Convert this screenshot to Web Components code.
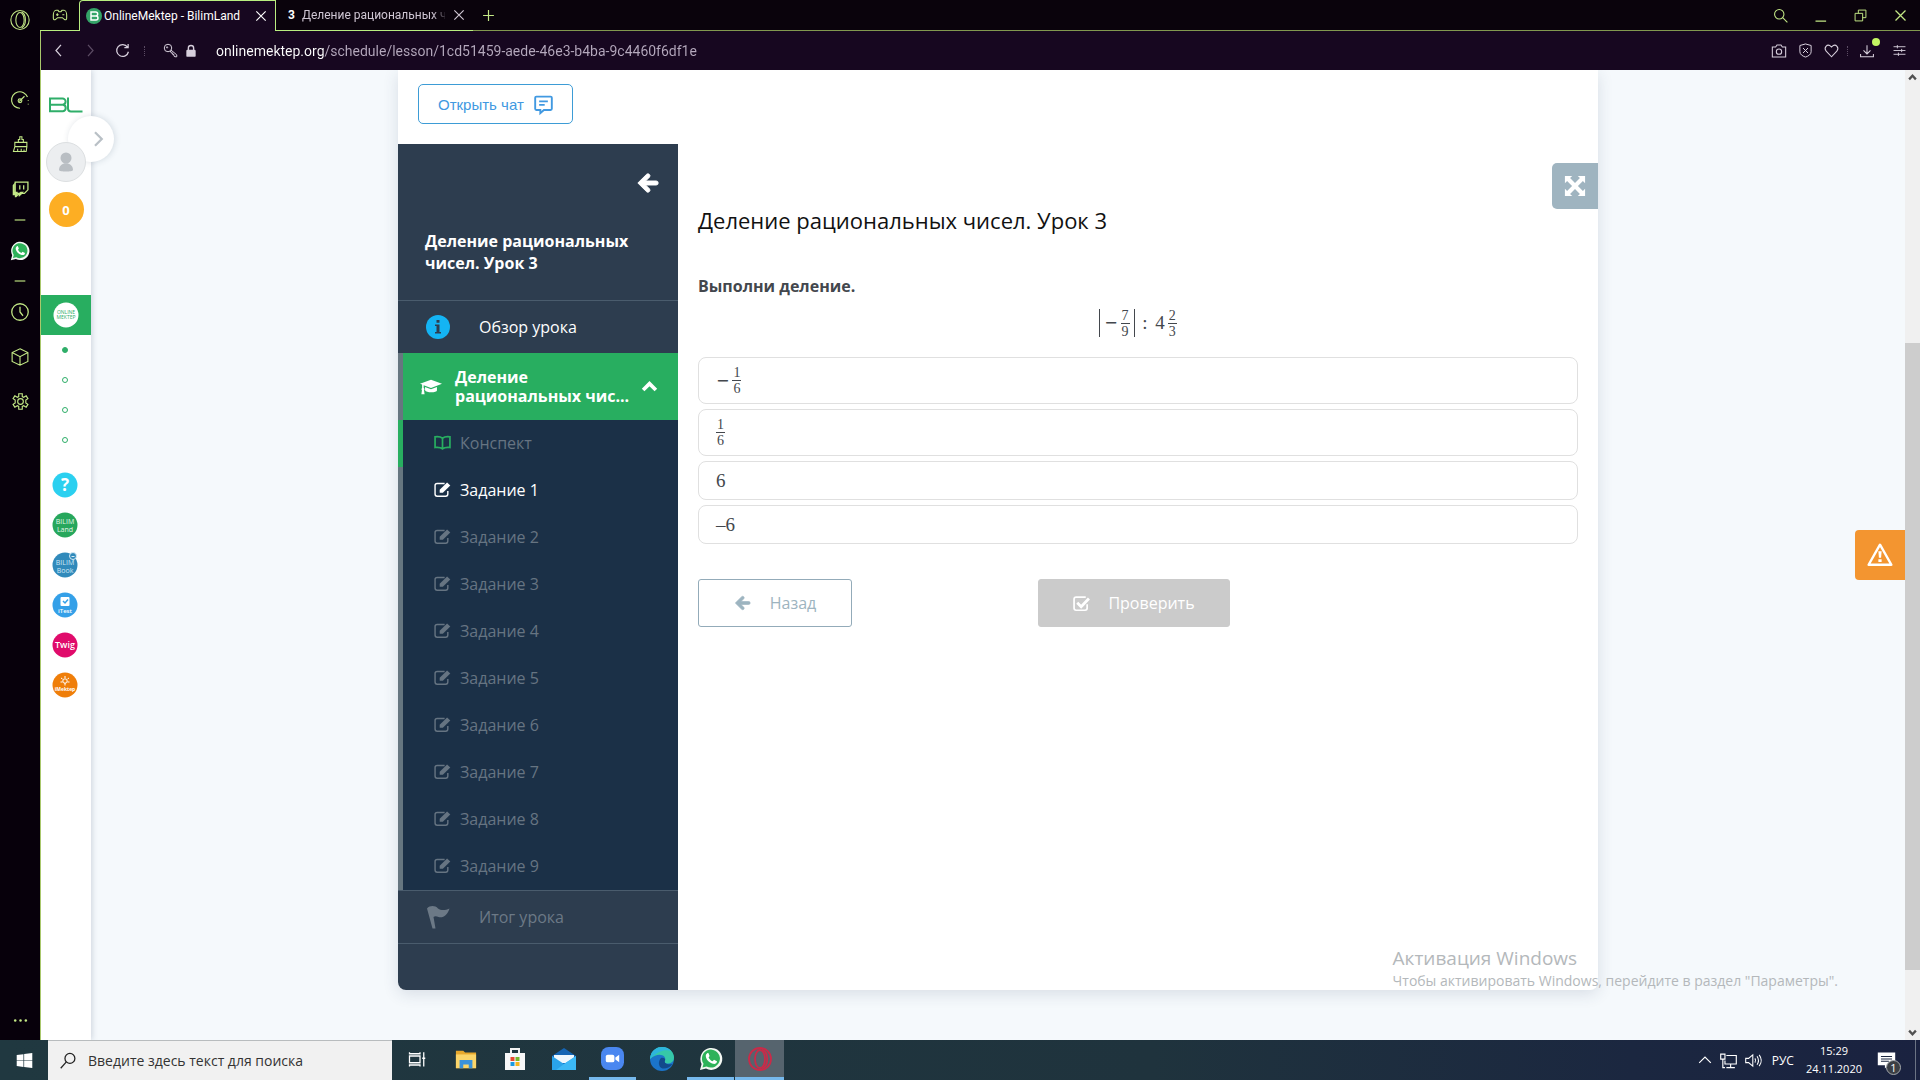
<!DOCTYPE html>
<html lang="ru">
<head>
<meta charset="utf-8">
<title>OnlineMektep - BilimLand</title>
<style>
    html, body {
        margin: 0;
        height: 100%;
    }
    body {
        font-family: "Open Sans", "Noto Sans", sans-serif;
        font-size: 16px;
        overflow: hidden;
        background: #f5f9fc;
    }
</style>
</head>
<body>
<desktop-shell>
    <browser-rail slot="rail"></browser-rail>
    <tab-strip slot="tabs">
        <browser-tab active>
            <ui-icon slot="icon" name="bilim" size="16"></ui-icon>
            OnlineMektep - BilimLand
        </browser-tab>
        <browser-tab>
            <b slot="icon">3</b>
            Деление рациональных чисел
        </browser-tab>
    </tab-strip>
    <address-bar slot="address" value="onlinemektep.org/schedule/lesson/1cd51459-aede-46e3-b4ba-9c4460f6df1e"></address-bar>
    <site-page slot="page">
        <site-rail slot="rail"></site-rail>
        <lesson-nav slot="nav" heading="Деление рациональных чисел. Урок 3">
            <nav-item icon="info">Обзор урока</nav-item>
            <nav-group heading="Деление рациональных чис...">
                <task-item icon="book" done>Конспект</task-item>
                <task-item icon="edit" current>Задание 1</task-item>
                <task-item icon="edit">Задание 2</task-item>
                <task-item icon="edit">Задание 3</task-item>
                <task-item icon="edit">Задание 4</task-item>
                <task-item icon="edit">Задание 5</task-item>
                <task-item icon="edit">Задание 6</task-item>
                <task-item icon="edit">Задание 7</task-item>
                <task-item icon="edit">Задание 8</task-item>
                <task-item icon="edit">Задание 9</task-item>
            </nav-group>
            <nav-item icon="flag" muted>Итог урока</nav-item>
        </lesson-nav>
        <lesson-task heading="Деление рациональных чисел. Урок 3">
            <span slot="question">Выполни деление.</span>
            <math-row slot="formula">
                <math-abs><math-sign>−</math-sign><math-frac top="7" bottom="9"></math-frac></math-abs>
                <span>&nbsp;:&nbsp;</span><span>4</span><math-frac top="2" bottom="3"></math-frac>
            </math-row>
            <answer-option><math-row><math-sign>−</math-sign><math-frac top="1" bottom="6"></math-frac></math-row></answer-option>
            <answer-option><math-row><math-frac top="1" bottom="6"></math-frac></math-row></answer-option>
            <answer-option><math-row>6</math-row></answer-option>
            <answer-option><math-row>–6</math-row></answer-option>
        </lesson-task>
    </site-page>
    <win-taskbar slot="taskbar"></win-taskbar>
    <win-watermark slot="watermark"></win-watermark>
</desktop-shell>

<script>
    // name: [viewBox size, markup]
    const line = (body, width = 1.3) => `<g fill="none" stroke="currentColor" stroke-width="${width}">${body}</g>`;

    const icons = {
        opera: [24, line('<ellipse cx="12" cy="12" rx="11" ry="11.3"/><ellipse cx="12" cy="12" rx="5" ry="9"/><path d="M14 2.500c6 3 6 16 0 19"/>')],
        gx: [24, line('<path d="M6 5h3l1.500 2h3L15 5h3c2 0 4 3 4 7v5c0 2-2 3-3.500 1.500L15.500 16h-7l-3 2.500C4 20 2 19 2 17v-5c0-4 2-7 4-7zM8 9.500v4M6 11.500h4M15.500 11.500h3"/>', 1.6)],
        bilim: [24, '<circle cx="12" cy="12" r="12" fill="#35a468"/><path d="M7.500 6h7a3 3 0 0 1 0 6h-7zM7.500 12h7.500a3 3 0 0 1 0 6H7.500z" fill="none" stroke="#fff" stroke-width="2.200"/>'],
        close: [24, line('<path d="M4 4l16 16M20 4L4 20"/>', 2)],
        plus: [24, line('<path d="M12 2v20M2 12h20"/>', 2.2)],
        search: [24, line('<circle cx="10" cy="10" r="7.500"/><path d="M15.500 15.500L23 23"/>', 1.7)],
        minimize: [24, line('<path d="M4 21h17"/>', 2)],
        restore: [24, line('<path d="M2 8h14v14H2zM8 8V2h14v14h-6"/>', 1.8)],
        back: [24, line('<path d="M16 3L8 12l8 9"/>', 2)],
        forward: [24, line('<path d="M8 3l8 9-8 9"/>', 2)],
        reload: [24, line('<path d="M20 6.500A9.500 9.500 0 1 0 21.500 14M21 1.500v6h-6"/>', 2)],
        key: [24, line('<circle cx="8" cy="8" r="6"/><circle cx="6.500" cy="7" r="1"/><path d="M11 13l2 1v2h2.500v2.500h2V21l1.500 1h3v-3L12.500 11"/>', 1.6)],
        lock: [24, '<rect x="4" y="10" width="16" height="12" rx="2" fill="currentColor"/><path d="M7.500 11V7a4.500 4.500 0 0 1 9 0v4" fill="none" stroke="currentColor" stroke-width="2.400"/>'],
        camera: [24, line('<path d="M2 6h5l2-3h6l2 3h5v15H2z"/><circle cx="12" cy="13" r="4"/>', 1.6)],
        shield: [24, line('<path d="M12 1.500L21 4v10c0 4-4 7-9 8.500C7 21 3 18 3 14V4zM8 8l8 8M16 8l-8 8"/>', 1.6)],
        heart: [24, line('<path d="M12 22L3.500 13C-1 7.500 5 1 10 4.500L12 6.500l2-2C19 1 25 7.500 20.500 13z"/>', 1.7)],
        download: [24, line('<path d="M12 2v14M6 11l6 6 6-6M1 17v5h22v-5"/>', 1.8)],
        tune: [24, line('<path d="M1 5h22M1 12h22M1 19h22M8 2v6M16 9v6M10 16v6"/>', 1.7)],
        gauge: [24, line('<path d="M12 23A11 11 0 1 1 22 8M23 12v1M23 17v1M11 14l7-7"/><circle cx="12" cy="13" r="2.500"/>', 1.5)],
        cleaner: [24, line('<path d="M4 9h17v6H4zM4 15L2 22h18l1-7M9 9V5h2V1h3v4h2v4M8 22v-4M13 22v-4M17 22v-3"/>', 1.5)],
        twitch: [24, '<path d="M1 6l3-4v13h4v4l4-4h5l-5 5H9l-3 3H4v-3H1z" fill="currentColor"/><path d="M4.500 1.500h18v11l-5 5h-4l-3 3v-3h-6zM11 6v6M16.500 6v6" fill="none" stroke="currentColor" stroke-width="1.800"/>'],
        dash: [24, line('<path d="M4 12h16"/>', 1.7)],
        whatsapp: [24, '<path d="M1 23l1.600-6A11 11 0 1 1 7 21.500z" fill="#f4f8f4"/><path d="M3.500 20.500l1-3.800A9 9 0 1 1 7.600 19.500z" fill="#2eb25a"/><path d="M8 6.500c1-.8 1.500-.3 2 1l.6 1.500-1 1.500c1 2 2 3 4 3.800l1.400-1.500 3 1.500c-.2 2.200-2 3-4 2.500C10 15.500 7 12.500 6.800 9c0-1 .4-2 1.200-2.500z" fill="#fff"/>'],
        clock: [24, line('<circle cx="12" cy="12" r="11"/><path d="M12 5v7l4 5"/>', 1.7)],
        box: [24, line('<path d="M12 1l10.500 5v12L12 23 1.500 18V6zM1.500 6L12 11.500 22.500 6M12 11.500V23"/>', 1.5)],
        gear: [24, line('<path d="M9.500 1h5v4l2 1 3.500-2 2.500 4-3 2v4l3 2-2.500 4-3.500-2-2 1v4h-5v-4l-2-1L4 20l-2.500-4 3-2v-4l-3-2L4 4l3.500 2 2-1z"/><circle cx="12" cy="12" r="4"/>', 1.6)],
        dots: [24, '<g fill="currentColor"><circle cx="3.500" cy="12" r="2"/><circle cx="12" cy="12" r="2"/><circle cx="20.500" cy="12" r="2"/></g>'],
        logo: [34, '<path d="M1 10.500h12.500a3 3 0 0 1 0 6.200H1zm0 6.200h13a3.300 3.300 0 0 1 0 6.500H1zM19 9.500v11q0 3 3 3h11.500" fill="none" stroke="#2fae69" stroke-width="2"/>'],
        user: [40, '<circle cx="20" cy="20" r="19.500" fill="#eceef0" stroke="#dcdfe1"/><circle cx="20" cy="16" r="5.500" fill="#b9bec3"/><path d="M13 28c0-9 14-9 14 0 0 2-14 2-14 0z" fill="#b9bec3"/>'],
        mektep: [26, '<circle cx="13" cy="13" r="12.500" fill="#fff"/><g fill="#2fae69" font-size="5" text-anchor="middle"><text x="13" y="12">ONLINE</text><text x="13" y="17">MEKTEP</text></g>'],
        help: [26, '<circle cx="13" cy="13" r="12.500" fill="#2bd0f0"/><text x="13" y="19" fill="#fff" font-size="17" font-weight="700" text-anchor="middle">?</text>'],
        land: [26, '<circle cx="13" cy="13" r="12.500" fill="#27a75c"/><g fill="#e3f6ea" font-size="7" text-anchor="middle"><text x="13" y="12">BILIM</text><text x="13" y="20">Land</text></g>'],
        bookshop: [26, '<circle cx="13" cy="13" r="12.500" fill="#318abb"/><g fill="#cfe8f6" font-size="7" text-anchor="middle"><text x="13" y="13">BILIM</text><text x="13" y="21">Book</text></g><circle cx="21" cy="4" r="3.500" fill="#318abb" stroke="#d8ecf7"/><path d="M19.500 4.500h3" stroke="#d8ecf7"/>'],
        itest: [26, '<circle cx="13" cy="13" r="12.500" fill="#34a0e8"/><rect x="8.500" y="5" width="9" height="9" rx="1" fill="#fff"/><path d="M11 9l2 2 3-3.500" fill="none" stroke="#34a0e8" stroke-width="1.500"/><text x="13" y="21" fill="#fff" font-size="6" font-weight="600" text-anchor="middle">iTest</text>'],
        twig: [26, '<circle cx="13" cy="13" r="12.500" fill="#e00b6b"/><text x="13" y="16" fill="#fff" font-size="9" font-weight="600" text-anchor="middle">Twig</text>'],
        imektep: [26, '<circle cx="13" cy="13" r="12.500" fill="#ef7e09"/><circle cx="13" cy="9" r="2.200" fill="none" stroke="#fff"/><path d="M13 4v2M9 6l1.500 1M17 6l-1.500 1M8.500 10h2M15.500 10h2M13 11v2.500" stroke="#fff"/><text x="13" y="18.500" fill="#fff" font-size="5" font-weight="700" text-anchor="middle">iMektep</text>'],
        chevron: [24, line('<path d="M8 3l9 9-9 9"/>', 3)],
        chat: [24, line('<path d="M3 2h18q1.500 0 1.500 1.500v14q0 1.500-1.500 1.500h-8.500l-4.500 4v-4H3q-1.500 0-1.500-1.500v-14Q1.500 2 3 2zM6.500 8h11M6.500 12.500h7"/>', 2.4)],
        arrow: [24, '<path d="M22 9.800H10.500l4.200-4.200a2.200 2.200 0 0 0-3.100-3.100L2 12l9.600 9.500a2.200 2.200 0 0 0 3.100-3.100l-4.200-4.200H22a2.200 2.200 0 0 0 0-4.400z" fill="currentColor" stroke="currentColor"/>'],
        info: [24, '<circle cx="12" cy="12" r="12" fill="#14b4f4"/><path d="M9 9.500h4.500V17H15v1.500H9V17h1.500v-6H9zM10.500 5h3v2.800h-3z" fill="#2e3d4f"/>'],
        cap: [24, '<path d="M12 4l12 4.500L12 13 4 10v3c1.200.7 1 2 .4 2.500L5 20H1.500l.6-4.500c-.8-1-.5-2 .2-2.500V9.300L0 8.500zM5.500 12l6.500 2.500 6.500-2.500v3.500c0 3-12 3-13 0z" fill="currentColor"/>'],
        up: [24, line('<path d="M3 17l9-9 9 9"/>', 5.2)],
        book: [24, line('<path d="M12 6C9 3.500 5 3.500 1.500 4v15c4-.5 7.500-.5 10.500 2 3-2.500 6.500-2.500 10.500-2V4C19 3.500 15 3.500 12 6zM12 6v15"/>', 2.4)],
        edit: [24, line('<path d="M15 3.500H4.500q-3 0-3 3v12q0 3 3 3h12q3 0 3-3V14"/>', 2) + '<path d="M8 16.500v-4.200L18.500 2 23 6.300 12.500 16.500z" fill="currentColor"/>'],
        flag: [24, '<path d="M1 3.500c3-3.200 8-3.200 11 0 3 2 7 2 11.500 0-2 6.500-6.500 10-11 8.500-2-1-4-1-5 0l2 11.500H6.500z" fill="currentColor"/>'],
        check: [24, line('<path d="M18 3H4.500q-3 0-3 3v12.500q0 3 3 3H17q3 0 3-3V13"/>', 2.4) + '<path d="M6 11l5.500 5.500L22.500 5" fill="none" stroke="currentColor" stroke-width="4"/>'],
        expand: [24, '<path d="M1 1h8L6.600 3.400 12 8.800l5.400-5.400L15 1h8v8l-2.400-2.400L15.200 12l5.400 5.400L23 15v8h-8l2.400-2.400L12 15.200l-5.400 5.400L9 23H1v-8l2.400 2.400L8.800 12 3.400 6.600 1 9z" fill="currentColor"/>'],
        warning: [24, line('<path d="M12 2.500L22.500 21h-21z" stroke-linejoin="round"/>', 2.2) + '<path d="M10.500 8.500h3l-.5 6h-2zM10.500 16h3v2.500h-3z" fill="currentColor"/>'],
        scroll: [24, line('<path d="M3 17l9-10 9 10"/>', 6)],
        windows: [24, '<path d="M1 4.300l9.500-1.300v8.500H1zM11.500 2.900L23 1.300v10.200H11.500zM1 12.500h9.500V21L1 19.700zM11.500 12.500H23v10.200L11.500 21z" fill="currentColor"/>'],
        find: [24, line('<circle cx="14" cy="9" r="7"/><path d="M9 14l-8 9"/>', 1.8)],
        taskview: [24, line('<path d="M2 8h14v9H2zM2 3v2h14V3M2 22v-2h14v2M21 3v19M19 11h4"/>', 1.7)],
        explorer: [24, '<path d="M1 3h8l2 2h12v17H1z" fill="#e8a82c"/><path d="M1 7h22v15H1z" fill="#fcd569"/><path d="M5 22v-9h14v9h-4v-4H9v4z" fill="#3a92dc"/>'],
        store: [24, '<path d="M8 7V2h8v5" fill="none" stroke="#f2f2f2" stroke-width="2"/><path d="M2 6h20v17H2z" fill="#f7f7f7"/><path d="M7.500 10h4v4h-4z" fill="#e8492f"/><path d="M12.500 10h4v4h-4z" fill="#76b82a"/><path d="M7.500 15h4v4h-4z" fill="#1a9ae0"/><path d="M12.500 15h4v4h-4z" fill="#f5b51d"/>'],
        mail: [24, '<path d="M0 9L12 1l12 8v14H0z" fill="#1565b4"/><path d="M2 8h20v8H2z" fill="#eef7fd"/><path d="M0 9l12 8 12-8v14H0z" fill="#2aa3ea"/><path d="M12 17L24 9v14H4z" fill="#3cb8f5"/>'],
        zoom: [24, '<rect width="24" height="24" rx="8" fill="#4a87f0"/><rect x="5" y="8" width="9" height="8" rx="2" fill="#fff"/><path d="M15 11l4-3v8l-4-3z" fill="#fff"/>'],
        edge: [24, '<circle cx="12" cy="12" r="12" fill="#1b74c9"/><path d="M0 12C1 3 7 0 12 0c8 0 12 6 12 10.500 0 4-3 6-6.500 6-3 0-3.500-1.500-2.500-3C17 9 9 4 0 12z" fill="#36c8a8"/><path d="M0 12C1 3 7 0 12 0c4 0 7 1.500 9 4C15 2 8 4 0 12z" fill="#2db5dd"/><path d="M15 13.500c-1 2 1 4.500 7.500 3.500-3 4-7 5-10 4.500C8 20 8 14 11 11c2-1 5 .5 4 2.500z" fill="#124a8c"/>'],
        operagx: [24, '<g fill="none" stroke="#c92b49" stroke-width="1.800"><circle cx="12" cy="12" r="11"/><ellipse cx="12" cy="12" rx="5" ry="9"/><path d="M14 2.500c7 3 7 16 0 19"/></g>'],
        tray: [24, line('<path d="M2 17L12 7l10 10"/>', 2)],
        network: [24, line('<path d="M9 5h14v12H7v-5M15 17v5M9 22h12M1 3h6v7H1zM4 10v12h3"/>', 1.6)],
        speaker: [24, line('<path d="M1 9h4l6-5v16l-6-5H1zM14 9q2 3 0 6M17 6q4 6 0 12M20 4q6 8 0 16"/>', 1.5)],
        notes: [24, '<path d="M1 2h22v16h-9l-4 4v-4H1z" fill="#fff"/><path d="M5 7h14M5 10h14M5 13h10" stroke="#1b2740" stroke-width="1.300"/>']
    };

    const define = (tag, css, html) => {
        customElements.define(tag, class extends HTMLElement {
            constructor() {
                super();
                this.attachShadow({mode: 'open'});
            }

            connectedCallback() {
                const body = typeof html === 'function' ? html(this) : html;
                this.shadowRoot.innerHTML = `<style>* { box-sizing: border-box; } button { font: inherit; color: inherit; cursor: pointer; } ${css}</style>${body}`;
            }
        });
    };

    define('ui-icon', `
        :host { display: inline-flex; flex: none; }
        svg { display: block; font-family: "Open Sans", sans-serif; overflow: visible; }
    `, el => {
        const [box, body] = icons[el.getAttribute('name')];
        const size = el.getAttribute('size') || 24;
        return `<svg width="${size}" height="${size}" viewBox="0 0 ${box} ${box}" aria-hidden="true">${body}</svg>`;
    });

    define('desktop-shell', `
        :host {
            display: grid;
            grid-template: 31px 39px minmax(0, 1fr) 40px / 40px minmax(0, 1fr);
            height: 100vh;
            position: relative;
        }
        slot { display: grid; min-width: 0; min-height: 0; }
        .rail { grid-area: 1 / 1 / 4 / 2; }
        .tabs { grid-area: 1 / 2; }
        .address { grid-area: 2 / 2; }
        .page { grid-area: 3 / 2; }
        .taskbar { grid-area: 4 / 1 / 5 / 3; }
        .watermark {
            position: absolute;
            right: 82px;
            bottom: 89px;
            pointer-events: none;
        }
    `, `
        <slot class="rail" name="rail"></slot>
        <slot class="tabs" name="tabs"></slot>
        <slot class="address" name="address"></slot>
        <slot class="page" name="page"></slot>
        <slot class="taskbar" name="taskbar"></slot>
        <slot class="watermark" name="watermark"></slot>
    `);

    define('browser-rail', `
        :host {
            display: flex;
            flex-direction: column;
            align-items: center;
            padding: 10px 0;
            background: #07000b;
            color: #c3e886;
        }
        button { display: grid; place-items: center; width: 40px; height: 45px; padding: 0; border: 0; background: none; }
        .logo { height: 20px; margin-bottom: 47px; }
        .rule { height: 16px; }
        .more { height: 20px; margin-top: auto; }
    `, `
        <button class="logo" aria-label="Opera"><ui-icon name="opera" size="20"></ui-icon></button>
        <button aria-label="GX Control"><ui-icon name="gauge" size="18"></ui-icon></button>
        <button aria-label="GX Cleaner"><ui-icon name="cleaner" size="17"></ui-icon></button>
        <button aria-label="Twitch"><ui-icon name="twitch" size="17"></ui-icon></button>
        <ui-icon class="rule" name="dash" size="16"></ui-icon>
        <button aria-label="WhatsApp"><ui-icon name="whatsapp" size="20"></ui-icon></button>
        <ui-icon class="rule" name="dash" size="16"></ui-icon>
        <button aria-label="История"><ui-icon name="clock" size="18"></ui-icon></button>
        <button aria-label="Расширения"><ui-icon name="box" size="18"></ui-icon></button>
        <button aria-label="Настройки"><ui-icon name="gear" size="17"></ui-icon></button>
        <button class="more" aria-label="Ещё"><ui-icon name="dots" size="15"></ui-icon></button>
    `);

    define('tab-strip', `
        :host { display: flex; background: #0a030c; color: #c3e886; --edge: #b9ee80; }
        .gx, .rest { border-bottom: 1px solid var(--edge); }
        .gx { display: grid; place-items: center; width: 39px; }
        .rest { flex: 1; display: flex; align-items: center; justify-content: space-between; padding: 0 10px 0 5px; border-color: #82984f; }
        .window { display: flex; gap: 20px; }
        button { display: grid; place-items: center; padding: 0; border: 0; background: none; width: 20px; height: 20px; }
    `, `
        <span class="gx"><ui-icon name="gx" size="16"></ui-icon></span>
        <slot></slot>
        <div class="rest">
            <button aria-label="Новая вкладка"><ui-icon name="plus" size="13"></ui-icon></button>
            <div class="window">
                <button aria-label="Поиск вкладок"><ui-icon name="search" size="15"></ui-icon></button>
                <button aria-label="Свернуть"><ui-icon name="minimize" size="15"></ui-icon></button>
                <button aria-label="Развернуть"><ui-icon name="restore" size="13"></ui-icon></button>
                <button aria-label="Закрыть"><ui-icon name="close" size="15"></ui-icon></button>
            </div>
        </div>
    `);

    define('browser-tab', `
        :host {
            display: flex;
            align-items: center;
            gap: 7px;
            width: 197px;
            padding: 0 7px 0 12px;
            border-bottom: 1px solid var(--edge);
            color: #cfc6d3;
            font: 12px/20px Roboto, sans-serif;
            box-sizing: border-box;
        }
        :host([active]) {
            background: #170720;
            color: #fff;
            padding: 0 7px 0 6px;
            gap: 2px;
            border: 1px solid var(--edge);
            border-bottom: 0;
            border-radius: 4px 0 0 0;
        }
        .text { flex: 1; min-width: 0; overflow: hidden; white-space: nowrap; }
        :host(:not([active])) .text { mask-image: linear-gradient(90deg, #000 130px, transparent 146px); }
        button { display: grid; padding: 0; border: 0; background: none; }
        ::slotted(b) { color: #fff; }
    `, `
        <slot name="icon"></slot>
        <span class="text"><slot></slot></span>
        <button aria-label="Закрыть вкладку"><ui-icon name="close" size="14"></ui-icon></button>
    `);

    define('address-bar', `
        :host {
            display: flex;
            align-items: center;
            padding: 0 12px 0 8px;
            background: #170720;
            border-left: 1px solid #a9c86c;
            color: #d7cfdc;
        }
        button { display: grid; place-items: center; padding: 0; border: 0; background: none; width: 18px; height: 20px; }
        .nav { display: flex; gap: 14px; }
        .off { color: #5c4c64; }
        .dots { width: 1px; height: 10px; border-left: 1px dotted #5c4c64; margin: 0 16px 0 13px; }
        .site { display: flex; gap: 3px; margin-right: 8px; }
        /* the host name is brighter than the path */
        input {
            flex: 1;
            min-width: 0;
            border: 0;
            padding: 0;
            margin-left: 8px;
            outline: none;
            font: 14px/20px Roboto, sans-serif;
            color: transparent;
            background: linear-gradient(90deg, #fff 109px, #b5a9bd 109px);
            -webkit-background-clip: text;
            background-clip: text;
        }
        .tools { display: flex; align-items: center; gap: 8px; }
        .tools .dots { margin: 0 2px 0 -1px; }
        .load { position: relative; }
        .load::after {
            content: "";
            position: absolute;
            top: -3px;
            right: -4px;
            width: 8px;
            height: 8px;
            border-radius: 50%;
            background: #c3f562;
        }
        .tune { margin-left: 6px; }
    `, el => `
        <div class="nav">
            <button aria-label="Назад"><ui-icon name="back" size="15"></ui-icon></button>
            <button class="off" aria-label="Вперёд"><ui-icon name="forward" size="15"></ui-icon></button>
            <button aria-label="Обновить"><ui-icon name="reload" size="15"></ui-icon></button>
        </div>
        <span class="dots"></span>
        <div class="site">
            <button aria-label="Пароль"><ui-icon name="key" size="15"></ui-icon></button>
            <button aria-label="Защищено"><ui-icon name="lock" size="14"></ui-icon></button>
        </div>
        <input aria-label="Адрес" spellcheck="false" value="${el.getAttribute('value')}">
        <div class="tools">
            <button aria-label="Снимок"><ui-icon name="camera" size="16"></ui-icon></button>
            <button aria-label="Блокировка рекламы"><ui-icon name="shield" size="15"></ui-icon></button>
            <button aria-label="В закладки"><ui-icon name="heart" size="15"></ui-icon></button>
            <span class="dots"></span>
            <button class="load" aria-label="Загрузки"><ui-icon name="download" size="14"></ui-icon></button>
            <button class="tune" aria-label="Простые настройки"><ui-icon name="tune" size="13"></ui-icon></button>
        </div>
    `);

    define('site-page', `
        :host {
            display: flex;
            min-height: 0;
            position: relative;
            background: #f5f9fc;
            border-left: 1px solid #a9c86c;
        }
        .content { flex: 1; min-width: 0; display: flex; justify-content: center; padding-bottom: 50px; }
        .card {
            display: flex;
            flex-direction: column;
            width: 100%;
            max-width: 1200px;
            background: #fff;
            border-radius: 0 0 8px 8px;
            box-shadow: 0 4px 16px rgba(40, 60, 90, 0.14);
            clip-path: inset(0 -30px -30px -30px);
        }
        .bar { padding: 14px 20px 20px; }
        .chat {
            display: flex;
            align-items: center;
            gap: 10px;
            height: 40px;
            padding: 1px 19px 0;
            border: 1px solid #3d9cd6;
            border-radius: 5px;
            background: #fff;
            color: #4199e1;
            font: 15px/20px "Liberation Sans", sans-serif;
        }
        .lesson { flex: 1; display: grid; grid-template-columns: 280px minmax(0, 1fr); }
        .scroll {
            display: flex;
            flex-direction: column;
            align-items: center;
            justify-content: space-between;
            width: 15px;
            color: #505050;
            background: #f0f0f0;
        }
        .scroll ui-icon { padding: 3px 0; }
        .down { transform: rotate(180deg); }
        .track { flex: 1; width: 100%; display: grid; grid-template-rows: 258fr 627fr 55fr; }
        .thumb { grid-row: 2; background: #cdcdcd; }
        .alert {
            position: absolute;
            right: 15px;
            top: 460px;
            display: grid;
            place-items: center;
            width: 50px;
            height: 50px;
            padding: 0;
            border: 0;
            border-radius: 4px 0 0 4px;
            background: #f39530;
            color: #fff;
        }
    `, `
        <slot name="rail"></slot>
        <div class="content">
            <div class="card">
                <div class="bar"><button class="chat">Открыть чат <ui-icon name="chat" size="19"></ui-icon></button></div>
                <div class="lesson"><slot name="nav"></slot><slot></slot></div>
            </div>
        </div>
        <div class="scroll">
            <ui-icon name="scroll" size="9"></ui-icon>
            <div class="track"><div class="thumb"></div></div>
            <ui-icon class="down" name="scroll" size="9"></ui-icon>
        </div>
        <button class="alert" aria-label="Сообщить об ошибке"><ui-icon name="warning" size="26"></ui-icon></button>
    `);

    define('site-rail', `
        :host {
            display: flex;
            flex-direction: column;
            align-items: center;
            width: 50px;
            position: relative;
            background: #fff;
            box-shadow: 1px 0 6px rgba(40, 60, 90, 0.2);
            clip-path: inset(0 -40px 0 0);
        }
        a { display: grid; place-items: center; text-decoration: none; }
        .logo { margin-top: 18px; }
        .user { margin-top: 20px; }
        .score {
            width: 35px;
            height: 35px;
            margin: 10px 0 68px;
            border-radius: 50%;
            background: #fdae23;
            color: #fff;
            font-size: 13px;
            font-weight: 700;
        }
        .current { width: 100%; height: 40px; background: #28ae60; }
        .steps, .apps { display: grid; padding-right: 2px; }
        .steps { gap: 24px; margin: 12px 0 29px; }
        .steps i { width: 6px; height: 6px; border: 1px solid #2fae69; border-radius: 50%; }
        .steps i:first-child { background: #2fae69; }
        .apps { gap: 14px; }
        .toggle {
            position: absolute;
            z-index: -1;
            left: 27px;
            top: 46px;
            display: grid;
            align-items: center;
            justify-items: end;
            width: 46px;
            height: 46px;
            padding: 0 7px 0 0;
            border: 0;
            border-radius: 50%;
            background: #fff;
            color: #b9c0c6;
            box-shadow: 1px 0 6px rgba(40, 60, 90, 0.16);
        }
    `, `
        <a class="logo" href="#" aria-label="BilimLand"><ui-icon name="logo" size="34"></ui-icon></a>
        <a class="user" href="#" aria-label="Профиль"><ui-icon name="user" size="40"></ui-icon></a>
        <a class="score" href="#">0</a>
        <a class="current" href="#"><ui-icon name="mektep" size="26"></ui-icon></a>
        <div class="steps"><i></i><i></i><i></i><i></i></div>
        <div class="apps">
            ${['help', 'land', 'bookshop', 'itest', 'twig', 'imektep'].map(name => `<a href="#"><ui-icon name="${name}" size="26"></ui-icon></a>`).join('')}
        </div>
        <button class="toggle" aria-label="Развернуть меню"><ui-icon name="chevron" size="18"></ui-icon></button>
    `);

    define('lesson-nav', `
        :host {
            display: flex;
            flex-direction: column;
            background: #2d3d4f;
            border-radius: 0 0 0 8px;
            color: #fff;
        }
        header { padding: 26px 20px 26px 27px; border-bottom: 1px solid #4a5c6d; }
        button { display: grid; place-items: center; height: 26px; margin: 0 0 34px auto; padding: 0; border: 0; background: none; }
        h2 { margin: 0; font-size: 16px; line-height: 22px; font-weight: 700; }
    `, el => `
        <header>
            <button aria-label="Свернуть"><ui-icon name="arrow" size="22"></ui-icon></button>
            <h2>${el.getAttribute('heading')}</h2>
        </header>
        <slot></slot>
    `);

    define('nav-item', `
        :host { display: block; }
        :host([muted]) { border: solid #4a5c6d; border-width: 1px 0; color: #6c7986; }
        a {
            display: flex;
            align-items: center;
            gap: 29px;
            height: 52px;
            padding-left: 28px;
            color: inherit;
            text-decoration: none;
        }
    `, el => `<a href="#"><ui-icon name="${el.getAttribute('icon')}" size="24"></ui-icon><slot></slot></a>`);

    define('nav-group', `
        :host { display: block; background: #1b3047; }
        button {
            display: flex;
            align-items: center;
            gap: 6px;
            width: 100%;
            height: 67px;
            padding: 0 20px 0 17px;
            border: 0;
            border-left: 5px solid #667680;
            background: #28ae60;
            text-align: left;
            font-weight: 700;
            line-height: 19px;
        }
        span { flex: 1; padding-left: 7px; }
    `, el => `
        <button aria-expanded="true">
            <ui-icon name="cap" size="22"></ui-icon>
            <span>${el.getAttribute('heading')}</span>
            <ui-icon name="up" size="17"></ui-icon>
        </button>
        <slot></slot>
    `);

    define('task-item', `
        :host { display: block; border-left: 5px solid #667680; color: #667482; }
        :host([done]) { border-color: #28ae60; }
        :host([done]) ui-icon { color: #28ae60; }
        :host([current]) { color: #fff; }
        a {
            display: flex;
            align-items: center;
            gap: 9px;
            height: 47px;
            padding: 0 0 2px 31px;
            color: inherit;
            text-decoration: none;
        }
    `, el => `<a href="#"><ui-icon name="${el.getAttribute('icon')}" size="17"></ui-icon><slot></slot></a>`);

    define('lesson-task', `
        :host { display: block; position: relative; padding: 61px 20px 0; color: #43474d; }
        h1 { margin: 0 0 39px; font-size: 22px; line-height: 30px; font-weight: 400; color: #111; }
        .question { margin: 0; font-weight: 700; line-height: 24px; }
        .formula { display: flex; justify-content: center; align-items: center; height: 30px; margin: 10px 0 19px; }
        .answers { display: grid; gap: 5px; }
        .actions { display: flex; gap: 186px; margin-top: 35px; }
        .actions button {
            display: flex;
            align-items: center;
            justify-content: center;
            gap: 20px;
            width: 154px;
            height: 48px;
            padding: 0;
            border: 1px solid #93abb9;
            border-radius: 3px;
            background: #fff;
            color: #9db4c0;
        }
        .actions .check { width: 192px; gap: 18px; background: #cbcbcb; border-color: #cbcbcb; color: #fff; }
        .full {
            position: absolute;
            top: 19px;
            right: 0;
            display: grid;
            place-items: center;
            width: 46px;
            height: 46px;
            padding: 0;
            border: 0;
            border-radius: 5px 0 0 5px;
            background: #9fb4c0;
            color: #fff;
        }
    `, el => `
        <h1>${el.getAttribute('heading')}</h1>
        <p class="question"><slot name="question"></slot></p>
        <div class="formula"><slot name="formula"></slot></div>
        <div class="answers" role="radiogroup"><slot></slot></div>
        <div class="actions">
            <button><ui-icon name="arrow" size="16"></ui-icon>Назад</button>
            <button class="check"><ui-icon name="check" size="17"></ui-icon>Проверить</button>
        </div>
        <button class="full" aria-label="На весь экран"><ui-icon name="expand" size="22"></ui-icon></button>
    `);

    define('answer-option', `
        :host { display: block; }
        label {
            display: flex;
            align-items: center;
            min-height: 39px;
            padding: 7px 17px;
            border: 1px solid #e0e0e0;
            border-radius: 8px;
            background: #fff;
            cursor: pointer;
        }
        input { position: absolute; appearance: none; margin: 0; }
    `, '<label><input type="radio" name="answer"><slot></slot></label>');

    define('math-row', `
        :host {
            display: inline-flex;
            align-items: center;
            gap: 3px;
            font-family: "Liberation Serif", serif;
            font-size: 19px;
            line-height: 22px;
        }
    `, '<slot></slot>');

    define('math-abs', `
        :host {
            display: inline-flex;
            align-items: center;
            gap: 3px;
            padding: 0 4px;
            border: solid currentColor;
            border-width: 0 1px;
            height: 28px;
        }
    `, '<slot></slot>');

    // wider minus than the serif face has
    define('math-sign', `
        :host { display: block; font: 16px/22px "DejaVu Sans", sans-serif; }
    `, '<slot></slot>');

    define('math-frac', `
        :host { display: inline-grid; font-size: 14px; line-height: 15px; text-align: center; }
        span { padding: 0 1px; }
        .top { border-bottom: 1px solid currentColor; }
    `, el => `<span class="top">${el.getAttribute('top')}</span><span>${el.getAttribute('bottom')}</span>`);

    define('win-watermark', `
        :host { display: block; color: #b4b8bb; }
        p { margin: 0; }
        .title { font-size: 19px; line-height: 26px; }
        .note { font-size: 14px; line-height: 20px; }
    `, `
        <p class="title">Активация Windows</p>
        <p class="note">Чтобы активировать Windows, перейдите в раздел "Параметры".</p>
    `);

    define('win-taskbar', `
        :host {
            display: flex;
            min-width: 0;
            background: linear-gradient(90deg, #203840, #1f333d 60%, #1b2740 85%, #1a2240);
            color: #fff;
            font-size: 12px;
        }
        button { display: grid; place-items: center; padding: 0; border: 0; background: none; }
        .start { width: 48px; }
        .search {
            display: flex;
            align-items: center;
            gap: 11px;
            width: 344px;
            padding: 0 12px;
            border-top: 1px solid #b8bcbe;
            background: #f1f1f1;
            color: #222;
        }
        input { flex: 1; min-width: 0; border: 0; padding: 0; outline: none; background: none; font: 14px/20px "Open Sans", sans-serif; }
        input::placeholder { color: #333; opacity: 1; }
        .apps { display: flex; }
        .apps button { width: 49px; border-bottom: 3px solid transparent; }
        .apps button:nth-child(5), .apps button:nth-child(7) {
            border-image: linear-gradient(90deg, transparent 4px, #76b9ed 4px, #76b9ed 45px, transparent 45px) 3;
            border-width: 0 0 3px;
        }
        .apps button:last-child { background: #56646e; border-color: #76b9ed; }
        .tray { margin-left: auto; display: flex; align-items: center; }
        .tray > button { height: 40px; margin-right: 8px; }
        .lang { margin: 0 12px 0 2px; }
        time { text-align: center; font-size: 11px; line-height: 18px; }
        .tray > .notes { position: relative; margin: 0 19px 0 15px; }
        .badge {
            position: absolute;
            left: 9px;
            top: 20px;
            width: 15px;
            height: 15px;
            border: 1px solid #a5a9ad;
            border-radius: 50%;
            background: #3b3f45;
            font-size: 11px;
            line-height: 13px;
        }
        .show { align-self: stretch; width: 5px; border-left: 1px solid #6b7384; }
    `, `
        <button class="start" aria-label="Пуск"><ui-icon name="windows" size="17"></ui-icon></button>
        <label class="search"><ui-icon name="find" size="17"></ui-icon><input type="search" placeholder="Введите здесь текст для поиска" aria-label="Поиск"></label>
        <div class="apps">
            <button aria-label="Представление задач"><ui-icon name="taskview" size="18"></ui-icon></button>
            <button aria-label="Проводник"><ui-icon name="explorer" size="22"></ui-icon></button>
            <button aria-label="Магазин"><ui-icon name="store" size="24"></ui-icon></button>
            <button aria-label="Почта"><ui-icon name="mail" size="24"></ui-icon></button>
            <button aria-label="Zoom"><ui-icon name="zoom" size="23"></ui-icon></button>
            <button aria-label="Edge"><ui-icon name="edge" size="24"></ui-icon></button>
            <button aria-label="WhatsApp"><ui-icon name="whatsapp" size="24"></ui-icon></button>
            <button aria-label="Opera GX"><ui-icon name="operagx" size="24"></ui-icon></button>
        </div>
        <div class="tray">
            <button aria-label="Скрытые значки"><ui-icon name="tray" size="14"></ui-icon></button>
            <button aria-label="Сеть"><ui-icon name="network" size="17"></ui-icon></button>
            <button aria-label="Громкость"><ui-icon name="speaker" size="17"></ui-icon></button>
            <span class="lang">РУС</span>
            <time>15:29<br>24.11.2020</time>
            <button class="notes" aria-label="Уведомления"><ui-icon name="notes" size="19"></ui-icon><span class="badge">1</span></button>
            <span class="show"></span>
        </div>
    `);
</script>
</body>
</html>
